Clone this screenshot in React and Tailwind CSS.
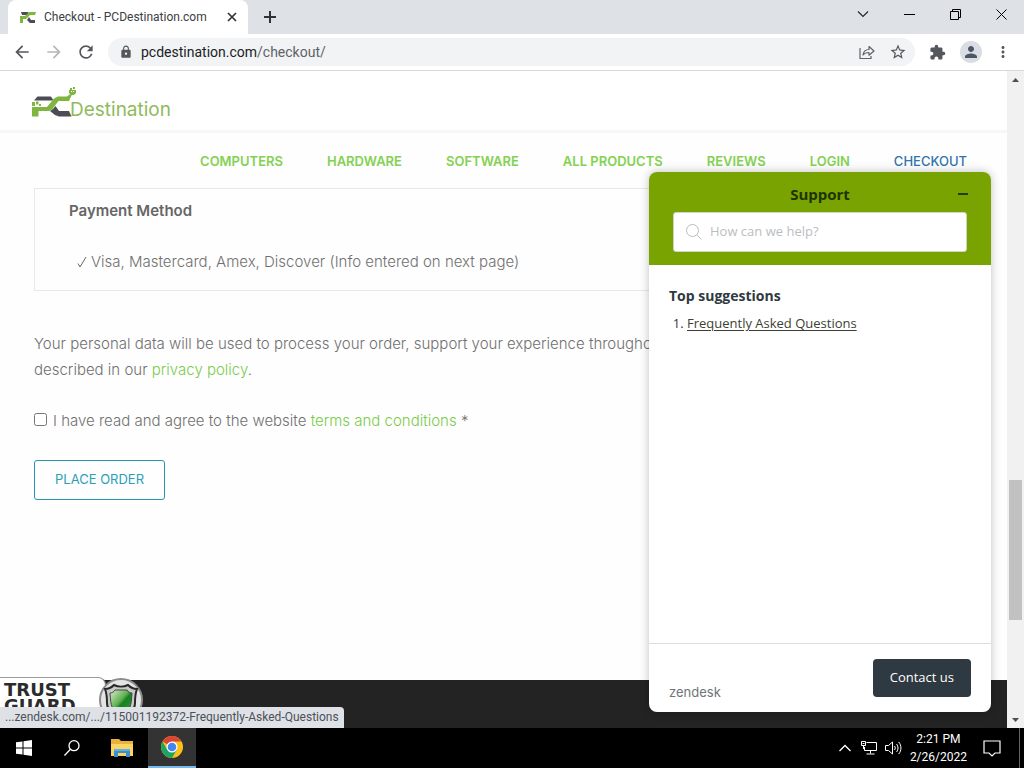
import React from "react";
import {
  MdArrowBack,
  MdArrowForward,
  MdRefresh,
  MdLock,
  MdStarBorder,
  MdExtension,
  MdPerson,
  MdMoreVert,
} from "react-icons/md";

function PcMark({ className }) {
  return (
    <svg viewBox="0 0 45 30" className={className} aria-hidden="true">
      <path d="M2 13.500L5.500 9.500H19l2.500 4z" fill="#4b4c55" />
      <path d="M0 20h15l7-8.500 4-2h9l4-3 1 1-3 6.500H26.500L20 22.500l-3 1.500H6.500v5.500H0z" fill="#7eb63f" />
      <path d="M0 15h3v4H0zM4 14.500h2.500v3H4zM7 17h2v2H7z" fill="#7eb63f" />
      <path d="M21 22l2.500-3 3.500 5h10l2.500 5.500H27l-4-1.500-5-4z" fill="#4b4c55" />
      <path d="M37 3h7v3l-2 2h-3l-2-2zM38 1h2v2h-2zM41 0h2v2h-2z" fill="#7eb63f" />
      <path d="M39 4h1v1h-1zM41 4h1v1h-1z" fill="#fff" />
    </svg>
  );
}

function TabStrip() {
  return (
    <div className="flex h-[34px] items-stretch bg-[#dee1e6] pl-2 text-[#3c4043]">
      <div className="flex w-60 items-center rounded-t-lg bg-white pr-2 pl-3">
        <svg viewBox="0 0 16 12" className="h-3 w-4" aria-hidden="true">
          <path d="M1 1h7l1 2-2 1H2zM9 6l-2 3 3 3h5V9h-4z" fill="#4b4c55" />
          <path d="M0 5h5l4-4h7l-1 3h-5L6 8H3v4H0z" fill="#7eb63f" />
        </svg>
        <span className="ml-2 flex-1 whitespace-nowrap font-['Roboto',sans-serif] text-xs">Checkout - PCDestination.com</span>
        <button aria-label="Close tab" className="flex size-4 items-center justify-center">
          <svg viewBox="0 0 10 10" className="size-2.5" stroke="#333" strokeWidth="1.7">
            <path d="M1 1l8 8M9 1L1 9" />
          </svg>
        </button>
      </div>
      <button aria-label="New tab" className="ml-3.5 flex w-4 items-center justify-center">
        <svg viewBox="0 0 12 12" className="size-3" stroke="#2f3236" strokeWidth="2">
          <path d="M6 0v12M0 6h12" />
        </svg>
      </button>
      <div className="ml-auto flex h-7 items-center">
        <button aria-label="Search tabs" className="flex w-[46px] justify-center">
          <svg viewBox="0 0 12 8" className="h-2 w-3" fill="none" stroke="#222" strokeWidth="1.1">
            <path d="M1 1.5l5 5 5-5" />
          </svg>
        </button>
        <button aria-label="Minimize" className="flex w-[46px] justify-center">
          <svg viewBox="0 0 11 11" className="size-[11px]" stroke="#000">
            <path d="M0 5.5h11" />
          </svg>
        </button>
        <button aria-label="Restore" className="flex w-[46px] justify-center">
          <svg viewBox="0 0 11 11" className="size-[11px]" fill="none" stroke="#000">
            <path d="M.5 2.5h8v8h-8zM2.5 2.5v-2h8v8h-2" />
          </svg>
        </button>
        <button aria-label="Close" className="flex w-[46px] justify-center">
          <svg viewBox="0 0 11 11" className="size-[11px]" stroke="#000">
            <path d="M.5.5l10 10M10.5.5l-10 10" />
          </svg>
        </button>
      </div>
    </div>
  );
}

function Toolbar() {
  return (
    <div className="flex h-[37px] items-center border-b border-[#d6d8da] bg-white pr-3 pl-3 text-[#54575b]">
      <button aria-label="Back"><MdArrowBack className="size-5" /></button>
      <button aria-label="Forward" className="ml-3 text-[#b5b7ba]"><MdArrowForward className="size-5" /></button>
      <button aria-label="Reload" className="ml-3"><MdRefresh className="size-5" /></button>
      <div className="ml-3 flex h-7 flex-1 items-center rounded-full bg-[#f1f3f4] pr-2 pl-[11px]">
        <MdLock className="size-3.5 shrink-0" />
        <div className="ml-2 flex-1 font-['Roboto',sans-serif] text-[14px] text-[#5f6368]">
          <span className="text-[#202124]">pcdestination.com</span>/checkout/
        </div>
        <button aria-label="Share">
          <svg viewBox="0 0 16 16" className="size-4" fill="none" stroke="#5f6368" strokeWidth="1.2">
            <path d="M1 4v10.5h11V12" />
            <path d="M4 11c.5-4 2.500-5.500 6-5.500V2.500L15 7l-5 4.200V8.500C7.500 8.500 5.500 9 4 11z" strokeLinejoin="round" />
          </svg>
        </button>
        <button aria-label="Bookmark" className="ml-3.5"><MdStarBorder className="size-[18px]" /></button>
      </div>
      <button aria-label="Extensions" className="ml-3.5"><MdExtension className="size-[17px]" /></button>
      <button aria-label="Profile" className="ml-3.5 flex size-[22px] items-center justify-center rounded-full bg-[#dadde4] text-[#4c5667]">
        <MdPerson className="size-[18px]" />
      </button>
      <button aria-label="Menu" className="ml-3"><MdMoreVert className="size-[18px]" /></button>
    </div>
  );
}

const NAV = ["COMPUTERS", "HARDWARE", "SOFTWARE", "ALL PRODUCTS", "REVIEWS", "LOGIN"];

function CheckoutPage() {
  return (
    <div className="flex flex-1 flex-col overflow-hidden bg-[#fefefe] font-['Inter',sans-serif] text-[15px] text-[#707070]">
      <header className="flex h-[62px] items-start border-b-3 border-[#f7f7f7] bg-white pt-4 pl-8">
        <a href="#home" className="flex items-start">
          <PcMark className="h-[30px] w-[45px]" />
          <span className="-ml-[7px] pt-[11px] text-[19px] leading-6 text-[#8fbb5c]">Destination</span>
        </a>
      </header>
      <nav className="flex h-[55px] items-center justify-end gap-11 pt-0.5 pr-10 text-[13px] font-semibold text-[#84d152]">
        {NAV.map((item) => (
          <a key={item} href="#nav">{item}</a>
        ))}
        <a href="#checkout" className="font-medium text-[#2f74ae]">CHECKOUT</a>
      </nav>
      <main className="flex-1 pr-8 pl-[34px]">
        <section className="h-[103px] border border-[#e8e8e8] pt-3 pl-[34px]">
          <h3 className="leading-5 font-semibold text-[#666]">Payment Method</h3>
          <p className="mt-[31px] flex items-center pl-2 leading-5 font-light">
            <svg viewBox="0 0 10 12" className="mr-1 h-3 w-2.5" fill="none" stroke="#666">
              <path d="M1 7.500L3 11 9 1" />
            </svg>
            Visa, Mastercard, Amex, Discover (Info entered on next page)
          </p>
        </section>
        <p className="mt-10 leading-[26px] font-light whitespace-nowrap">
          Your personal data will be used to process your order, support your experience throughout this website, and for other purposes
          <br />
          described in our <a href="#privacy" className="text-[#7acb4a]">privacy policy</a>.
        </p>
        <div className="mt-[25px] flex items-center leading-[26px] font-light">
          <input id="agree" type="checkbox" className="mr-1.5 mb-1 size-[13px]" />
          <label htmlFor="agree">
            I have read and agree to the website <a href="#terms" className="text-[#7acb4a]">terms and conditions</a> *
          </label>
        </div>
        <button className="mt-[26px] h-10 rounded-[3px] border border-[#2597ad] px-5 text-[13px] text-[#2a9fb8]">PLACE ORDER</button>
      </main>
      <footer className="relative h-12 bg-[#232323]">
        <div className="absolute -top-[3px] left-0 h-[51px] overflow-hidden">
          <div className="flex">
            <div className="h-14 w-[106px] rounded-tr-lg border-t border-r border-[#999] bg-white pt-1 pl-1 font-['DejaVu_Sans',sans-serif] text-[18px] leading-4 font-bold text-[#2b2b2b]">
              TRUST
              <br />
              GUARD
            </div>
            <svg viewBox="0 0 46 46" className="-ml-2 size-[46px]" aria-hidden="true">
              <defs>
                <linearGradient id="shield" x1="0" y1="0" x2="1" y2="1">
                  <stop offset="0" stopColor="#d8f0d0" />
                  <stop offset=".45" stopColor="#5fae4d" />
                  <stop offset=".55" stopColor="#168024" />
                  <stop offset="1" stopColor="#2f9f36" />
                </linearGradient>
              </defs>
              <circle cx="23" cy="23" r="21" fill="#e5e5e5" stroke="#8b8b8b" strokeWidth="2" />
              <path d="M7 12c4 0 7-2 9-4 4 2 10 2 14 0 2 2 5 4 9 4-2 5-2 9-2 14 0 8-7 12-14 16-7-4-14-8-14-16 0-5 0-9-2-14z" fill="#c9c9c9" stroke="#292929" strokeWidth="2" />
              <path d="M12 16c2 0 4-1 5-3h12c1 2 3 3 5 3-1 14-1 16-11 22-10-6-10-8-11-22z" fill="url(#shield)" stroke="#444" />
            </svg>
          </div>
        </div>
      </footer>
    </div>
  );
}

function ScrollBar() {
  return (
    <div className="flex w-[17px] flex-col items-center bg-[#f1f1f1]" aria-hidden="true">
      <svg viewBox="0 0 17 17" className="size-[17px]"><path d="M5 11h7L8.500 7z" fill="#505050" /></svg>
      <div className="flex-[392]" />
      <div className="w-[13px] flex-[140] bg-[#c1c1c1]" />
      <div className="flex-[91]" />
      <svg viewBox="0 0 17 17" className="size-[17px]"><path d="M5 7h7l-3.500 4z" fill="#505050" /></svg>
    </div>
  );
}

function SupportWidget() {
  return (
    <aside className="absolute top-[101px] right-[33px] bottom-4 flex w-[342px] flex-col overflow-hidden rounded-lg bg-white shadow-[0_0_10px_rgba(0,0,0,0.25)]">
      <div className="bg-[#78a300] pb-[13px]">
        <div className="flex h-10 items-center px-5 pt-1 text-[#1f3300]">
          <h2 className="flex-1 pl-4 text-center text-[15px] font-bold">Support</h2>
          <button aria-label="Minimize support" className="flex w-4 justify-center">
            <svg viewBox="0 0 10 2" className="h-0.5 w-2.5"><path d="M0 0h10v2H0z" fill="#243c05" /></svg>
          </button>
        </div>
        <div className="mx-6 flex h-10 items-center rounded-[3px] border border-[#d0d6c4] bg-white px-3">
          <svg viewBox="0 0 16 16" className="size-4" fill="none" stroke="#b9bbbc">
            <circle cx="6.500" cy="6.500" r="6" />
            <path d="M11 11l4.500 4.500" />
          </svg>
          <input aria-label="How can we help?" placeholder="How can we help?" className="ml-2 min-w-0 flex-1 text-[13px] outline-none placeholder:text-[#bbbdbf]" />
        </div>
      </div>
      <div className="flex-1 px-5 pt-5 text-[#2f3941]">
        <h3 className="text-[14px] leading-[22px] font-bold">Top suggestions</h3>
        <ol className="mt-1.5 list-decimal pl-[18px] text-[13px] leading-5">
          <li><a href="#faq" className="text-[#3c3f31] underline underline-offset-2">Frequently Asked Questions</a></li>
        </ol>
      </div>
      <div className="flex h-[69px] justify-between border-t border-[#dcdddd] px-5 pt-[15px]">
        <a href="#zendesk" className="self-end pb-2.5 font-['Inter',sans-serif] text-[13px] text-[#6f7478]">zendesk</a>
        <button className="h-[38px] rounded bg-[#2f3941] px-[17px] text-[13px] font-medium text-white">Contact us</button>
      </div>
    </aside>
  );
}

function Taskbar() {
  return (
    <div className="flex h-10 items-stretch bg-black text-white">
      <button aria-label="Start" className="flex w-12 items-center justify-center">
        <svg viewBox="0 0 16 16" className="size-4" fill="#fff">
          <path d="M0 2.300l6.500-.9v6.100H0zM7.500 1.200L16 0v7.500H7.500zM0 8.500h6.500v6.100L0 13.700zM7.500 8.500H16V16l-8.500-1.200z" />
        </svg>
      </button>
      <button aria-label="Search" className="flex w-12 items-center justify-center">
        <svg viewBox="0 0 16 16" className="size-4" fill="none" stroke="#fff" strokeWidth="1.300">
          <circle cx="10" cy="5.700" r="5" />
          <path d="M6.400 9.300L.5 15.500" />
        </svg>
      </button>
      <button aria-label="File Explorer" className="flex w-[52px] items-center justify-center">
        <svg viewBox="0 0 22 18" className="h-[18px] w-[22px]">
          <path d="M0 0h8l2 2h12v15H0z" fill="#e9b23c" />
          <path d="M0 5h22v12H0z" fill="#fcd462" />
          <path d="M3 10h16v8h-4v-4H7v4H3z" fill="#3c8fce" />
          <path d="M3 10h16v2H3z" fill="#5eb0e5" />
        </svg>
      </button>
      <button aria-label="Google Chrome" className="flex w-12 items-center justify-center border-b-2 border-[#76b9ed] bg-[#333]">
        <svg viewBox="0 0 24 24" className="size-6">
          <circle cx="12" cy="12" r="11" fill="#fbc116" />
          <path d="M12 12L2.500 6.500A11 11 0 0 1 21.500 6.500H12z" fill="#db4437" />
          <path d="M2.500 6.500A11 11 0 0 0 12 23l4.800-8.200L12 12l-4.800 2.700z" fill="#1da462" />
          <circle cx="12" cy="12" r="5.500" fill="#fff" />
          <circle cx="12" cy="12" r="4.300" fill="#4285f4" />
        </svg>
      </button>
      <div className="ml-auto flex items-center">
        <button aria-label="Show hidden icons">
          <svg viewBox="0 0 12 8" className="h-2 w-3" fill="none" stroke="#fff" strokeWidth="1.300"><path d="M.5 7L6 1.500 11.500 7" /></svg>
        </button>
        <button aria-label="Network" className="ml-2.5">
          <svg viewBox="0 0 16 14" className="h-3.5 w-4" fill="none" stroke="#fff">
            <path d="M5.500 1.500h10v8H3.500V6M9.500 9.500v3M5.500 13h8" />
            <path d="M.5.500h4v4h-4zM2.500 4.500V8M1.500 2.500h2" />
          </svg>
        </button>
        <button aria-label="Volume" className="ml-2">
          <svg viewBox="0 0 17 14" className="h-3.5 w-[17px]" fill="none" stroke="#fff">
            <path d="M.5 4.500h3l4-3.500v12l-4-3.500h-3zM9.500 5c1 1.500 1 2.500 0 4M11.500 3c2 2.500 2 5.500 0 8M13.700 1c3 3.500 3 8.500 0 12" />
          </svg>
        </button>
        <div className="ml-2 text-center font-['Roboto',sans-serif] text-[12px] leading-[18px]">
          2:21 PM
          <br />
          2/26/2022
        </div>
        <button aria-label="Notifications" className="ml-4">
          <svg viewBox="0 0 18 17" className="h-[17px] w-[18px]" fill="none" stroke="#fff" strokeWidth="1.200">
            <path d="M1 1h16v12h-5l-3 3-3-3H1z" />
          </svg>
        </button>
        <div className="mr-1 ml-[18px] h-10 w-px bg-[#666]" />
      </div>
    </div>
  );
}

export default function App() {
  return (
    <div className="flex h-screen flex-col overflow-hidden font-['Open_Sans','Noto_Sans',sans-serif]">
      <TabStrip />
      <Toolbar />
      <div className="relative flex min-h-0 flex-1">
        <CheckoutPage />
        <ScrollBar />
        <SupportWidget />
        <div className="absolute bottom-0 left-0 h-[21px] rounded-tr bg-[#dee1e6] px-[5px] font-['Roboto',sans-serif] text-[12px] leading-5 text-[#4d5156]">
          ...zendesk.com/.../115001192372-Frequently-Asked-Questions
        </div>
      </div>
      <Taskbar />
    </div>
  );
}
